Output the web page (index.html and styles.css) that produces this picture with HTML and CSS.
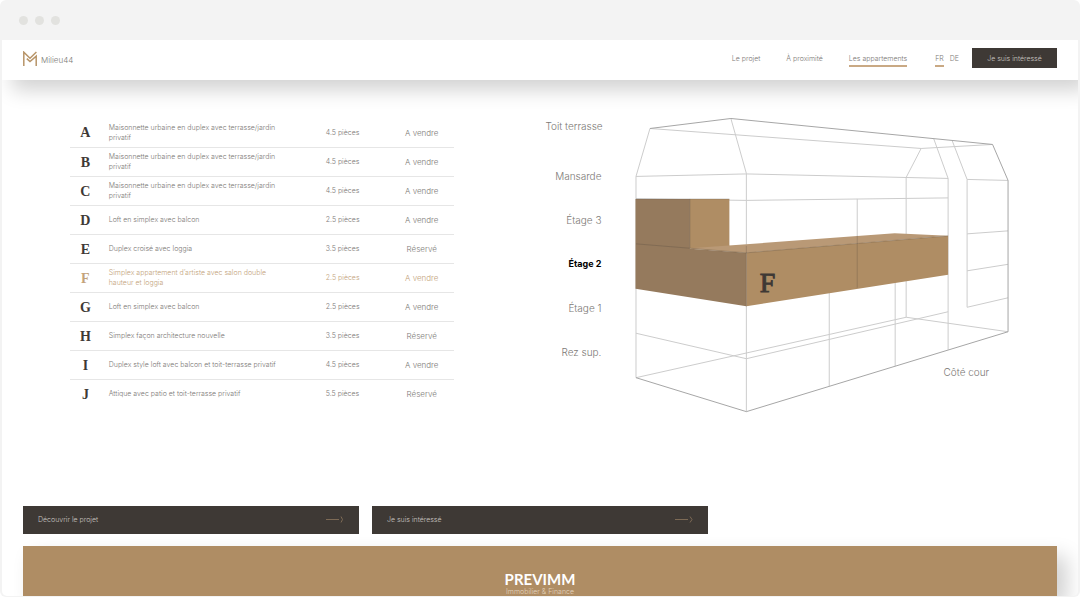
FILE: index.html
```html
<!DOCTYPE html>
<html lang="fr">
<head>
<meta charset="utf-8">
<title>Milieu 44 – Les appartements</title>
<link rel="stylesheet" href="styles.css">
</head>
<body>
<div class="window">
  <div class="window-bar"><span class="dot"></span><span class="dot"></span><span class="dot"></span></div>
  <div class="page">
    <header class="header">
      <a class="logo" href="#">
        <svg class="logo-mark" viewBox="0 0 14 15" aria-hidden="true"><path d="M.8 15V1.2L7 7.2 13.4 1M3.8 7.6 7 10.6l6.2-5.4V15"/></svg>
        <span>Milieu44</span>
      </a>
      <nav class="nav">
        <a href="#">Le projet</a>
        <a href="#">À proximité</a>
        <a class="current" href="#">Les appartements</a>
      </nav>
      <div class="langs"><a class="current" href="#">FR</a><a href="#">DE</a></div>
      <button class="header-button" type="button">Je suis intéressé</button>
    </header>
    <main class="main">
      <section class="overview">
        <table class="flats">
          <tbody>
            <tr><th scope="row">A</th><td class="desc">Maisonnette urbaine en duplex avec terrasse/jardin privatif</td><td class="rooms">4.5 pièces</td><td class="status">A vendre</td></tr>
            <tr><th scope="row">B</th><td class="desc">Maisonnette urbaine en duplex avec terrasse/jardin privatif</td><td class="rooms">4.5 pièces</td><td class="status">A vendre</td></tr>
            <tr><th scope="row">C</th><td class="desc">Maisonnette urbaine en duplex avec terrasse/jardin privatif</td><td class="rooms">4.5 pièces</td><td class="status">A vendre</td></tr>
            <tr><th scope="row">D</th><td class="desc">Loft en simplex avec balcon</td><td class="rooms">2.5 pièces</td><td class="status">A vendre</td></tr>
            <tr><th scope="row">E</th><td class="desc">Duplex croisé avec loggia</td><td class="rooms">3.5 pièces</td><td class="status">Réservé</td></tr>
            <tr class="active"><th scope="row">F</th><td class="desc">Simplex appartement d’artiste avec salon double hauteur et loggia</td><td class="rooms">2.5 pièces</td><td class="status">A vendre</td></tr>
            <tr><th scope="row">G</th><td class="desc">Loft en simplex avec balcon</td><td class="rooms">2.5 pièces</td><td class="status">A vendre</td></tr>
            <tr><th scope="row">H</th><td class="desc">Simplex façon architecture nouvelle</td><td class="rooms">3.5 pièces</td><td class="status">Réservé</td></tr>
            <tr><th scope="row">I</th><td class="desc">Duplex style loft avec balcon et toit-terrasse privatif</td><td class="rooms">4.5 pièces</td><td class="status">A vendre</td></tr>
            <tr><th scope="row">J</th><td class="desc">Attique avec patio et toit-terrasse privatif</td><td class="rooms">5.5 pièces</td><td class="status">Réservé</td></tr>
          </tbody>
        </table>
        <div class="building">
          <ul class="levels">
            <li>Toit terrasse</li>
            <li>Mansarde</li>
            <li>Étage 3</li>
            <li class="selected">Étage 2</li>
            <li>Étage 1</li>
            <li>Rez sup.</li>
          </ul>
          <svg class="drawing" viewBox="635 118 375 296" role="img" aria-label="Appartement F dans le bâtiment">
            <g class="thin">
              <path d="M650 128.500 921.500 148.500 993 144.500"/>
              <path d="M650 128.500 636 176.500V378"/>
              <path d="M731 118.500 746.500 173.500V412"/>
              <path d="M636 176.500 746.500 174 948.500 178.500"/>
              <path d="M636 199 746.500 200.500 948.500 198"/>
              <path d="M921.500 148.500 906.500 177.500V317.500"/>
              <path d="M934 138.500 948.500 178.500V350"/>
              <path d="M952.500 140.500 967.500 179.500V307.500L1008.500 298"/>
              <path d="M967.500 179.500 1008.500 180.500M967.500 234 1008.500 231M967.500 271 1008.500 264.500"/>
              <path d="M857.500 199V288M829.500 293V386.500M895.500 283V366.500"/>
              <path d="M636 333.500 746.500 359 948.500 312"/>
              <path d="M636 378 906.500 317.500 1008.500 332"/>
            </g>
            <path class="side" d="M635.500 199H690V249L746.500 253V306.500L635.500 289Z"/>
            <path class="front" d="M690 199H729.500V246L746.500 252.500 948.500 236V275L746.500 306.500V253L690 249Z"/>
            <path class="top" d="M690 248.500 895 233.500 948.500 236 746.500 253Z"/>
            <path class="fold" d="M636 244 746.500 253 948.500 236M690 199V248M746.500 246V306.500M857.500 236V288M636 199H729.500"/>
            <path class="outline" d="M650 128.500 731 118.500 993 144.500 1008.500 180.500V332L746.500 412 636 378"/>
            <text class="flat-letter" x="760" y="292">F</text>
            <text class="side-name" x="944" y="376">Côté cour</text>
          </svg>
        </div>
      </section>
      <div class="actions">
        <a class="action" href="#"><span>Découvrir le projet</span><svg class="arrow" viewBox="0 0 18 7" aria-hidden="true"><path d="M0 3.500H13M15 .5q3 3 0 6"/></svg></a>
        <a class="action" href="#"><span>Je suis intéressé</span><svg class="arrow" viewBox="0 0 18 7" aria-hidden="true"><path d="M0 3.500H13M15 .5 17 3.500 15 6.500"/></svg></a>
      </div>
    </main>
    <footer class="footer">
      <strong>PREVIMM</strong>
      <span>Immobilier &amp; Finance</span>
    </footer>
  </div>
</div>
</body>
</html>
```
FILE: styles.css
```css
* { box-sizing: border-box; }
body {
  margin: 0;
  background: #fff;
  color: #7c7976;
  font-family: Inter, "Liberation Sans", sans-serif;
  font-size: 7px;
  font-weight: 300;
}
a { color: inherit; text-decoration: none; }

.window {
  display: flex;
  flex-direction: column;
  height: 100vh;
  padding: 0 2px 1px;
  border-radius: 6px;
  background: #f3f3f3;
  overflow: hidden;
}
.window-bar {
  display: flex;
  flex: none;
  gap: 7px;
  height: 40px;
  padding: 16px 17px;
}
.dot {
  width: 9px;
  height: 9px;
  border-radius: 50%;
  background: #e2e2df;
}
.page {
  display: flex;
  flex: 1;
  flex-direction: column;
  min-height: 0;
  border-radius: 0 0 5px 5px;
  background: #fff;
  overflow: hidden;
}

.header {
  display: flex;
  flex: none;
  align-items: center;
  height: 40px;
  padding: 0 21px 4px;
  background: #fff;
  box-shadow: 10px 10px 20px rgba(0, 0, 0, .18);
}
.logo {
  display: flex;
  align-items: center;
  gap: 4px;
  margin-right: auto;
  font-size: 8px;
}
.logo-mark {
  width: 14px;
  height: 15px;
  fill: none;
  stroke: #b79468;
  stroke-width: 1.5;
}
.logo span { padding-top: 4px; }
.nav { display: flex; gap: 26px; margin-right: 28px; }
.nav a, .langs a {
  padding: 4px 0 2px;
  border-bottom: 2px solid transparent;
  line-height: 9px;
}
.nav .current, .langs .current { border-color: #c9a984; }
.langs { display: flex; gap: 6px; margin-right: 13px; }
.header-button {
  width: 85px;
  height: 20px;
  padding: 0;
  border: 0;
  background: #3e3935;
  color: #c8c4c0;
  font: inherit;
}

.main { padding: 38px 21px 12px; }
.overview {
  display: grid;
  grid-template-columns: 384fr 464fr;
  gap: 91px;
  padding: 0 47px;
}
.flats {
  width: 100%;
  align-self: start;
  border-collapse: collapse;
  table-layout: fixed;
}
.flats tr { height: 29px; border-bottom: 1px solid #e6e6e6; }
.flats tr:last-child { border-bottom: 0; }
.flats th, .flats td { padding: 0; font-weight: 300; line-height: 10px; vertical-align: middle; }
.flats th {
  width: 8%;
  padding-top: 2px;
  color: #3e3935;
  font: bold 14px/18px "Liberation Serif", serif;
}
.flats td { text-align: left; }
.flats .desc { width: 58%; padding: 1px 36px 0 8px; }
.flats .rooms { width: 17%; padding: 1px 0 0 2px; }
.flats .status { width: 17%; padding-top: 1px; font-size: 8px; text-align: center; }
.flats .active, .flats .active th { color: #c3a37b; }

.building { display: flex; gap: 32px; align-items: flex-start; }
.levels {
  flex: none;
  width: 58px;
  margin: 0;
  padding: 0 2px 0 0;
  list-style: none;
  font-size: 10px;
  line-height: 16px;
  text-align: right;
  white-space: nowrap;
}
.levels li { height: 44px; }
.levels li:first-child { height: 50px; }
.levels .selected { color: #000; font-size: 9px; font-weight: 700; }
.drawing { flex: 1; min-width: 0; }
.thin, .outline, .fold { fill: none; stroke: #ccc; }
.outline { stroke: #a6a6a6; }
.side { fill: #957a5d; }
.front { fill: #af8d64; }
.top { fill: #b99976; }
.fold { stroke: #3e3935; stroke-opacity: .22; }
.flat-letter {
  fill: #3e3935;
  stroke: #3e3935;
  stroke-width: 1;
  font: 28px "Liberation Serif", serif;
}
.side-name { fill: #7c7976; font-size: 10px; }

.actions {
  display: grid;
  grid-template-columns: repeat(3, 1fr);
  gap: 13px;
  margin-top: 92px;
}
.action {
  display: flex;
  align-items: center;
  justify-content: space-between;
  height: 28px;
  padding: 0 15px;
  background: #3e3935;
  color: #c8c4c0;
}
.arrow {
  width: 18px;
  height: 7px;
  fill: none;
  stroke: #7d6a55;
}

.footer {
  display: flex;
  flex: 1 0 auto;
  flex-direction: column;
  align-items: center;
  margin: 0 21px;
  padding-top: 25px;
  background: #af8d64;
  box-shadow: 10px 10px 20px rgba(0, 0, 0, .18);
  color: #e3d3be;
}
.footer strong {
  color: #fff;
  font: bold 15px/16px Lato, sans-serif;
}
```
